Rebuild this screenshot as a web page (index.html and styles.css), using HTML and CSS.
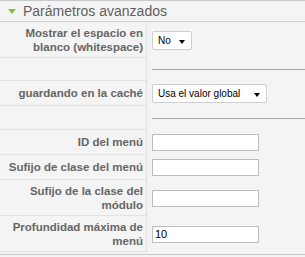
FILE: index.html
```html
<!DOCTYPE html>
<html lang="es">
<head>
<meta charset="utf-8">
<title>Parámetros avanzados</title>
<link rel="stylesheet" href="styles.css">
</head>
<body>
<div class="panel">
  <h3 class="title"><span class="toggle"></span>Parámetros avanzados</h3>
  <div class="params">
    <div class="key tall">Mostrar el espacio en blanco (whitespace)</div>
    <div class="val"><div class="select sel-no">No<span class="caret"></span></div></div>

    <div class="key sep"></div>
    <div class="val"><hr class="rule"></div>

    <div class="key mid">guardando en la caché</div>
    <div class="val"><div class="select sel-global">Usa el valor global<span class="caret"></span></div></div>

    <div class="key sep2"></div>
    <div class="val"><hr class="rule"></div>

    <div class="key mid">ID del menú</div>
    <div class="val"><input class="field" type="text" value=""></div>

    <div class="key mid">Sufijo de clase del menú</div>
    <div class="val"><input class="field" type="text" value=""></div>

    <div class="key tall">Sufijo de la clase del módulo</div>
    <div class="val"><input class="field" type="text" value=""></div>

    <div class="key tall">Profundidad máxima de menú</div>
    <div class="val"><input class="field" type="text" value="10"></div>
  </div>
</div>
</body>
</html>
```
FILE: styles.css
```css
html, body {
  margin: 0;
  padding: 0;
  background: #f4f4f4;
}
body {
  font-family: "Liberation Sans", Arial, sans-serif;
}
.panel {
  border-top: 1px solid #c8c8c8;
  border-bottom: 1px solid #c8c8c8;
  background: #f4f4f4;
  height: 253px;
  overflow: hidden;
}
.title {
  margin: 0;
  height: 20px;
  line-height: 20px;
  font-size: 14px;
  font-weight: normal;
  color: #5f5f5f;
  border-bottom: 1px solid #d0d0d0;
  display: flex;
  align-items: center;
  padding-left: 8px;
}
.toggle {
  width: 0;
  height: 0;
  border-left: 4px solid transparent;
  border-right: 4px solid transparent;
  border-top: 5px solid #80c044;
  margin-right: 7px;
  margin-top: 1px;
}
.params {
  display: grid;
  grid-template-columns: 147px 1fr;
}
.key {
  box-sizing: border-box;
  background: #f4f4f4;
  border-right: 1px solid #e2e2e2;
  border-bottom: 1px solid #e2e2e2;
  color: #666;
  font-size: 11.5px;
  font-weight: bold;
  line-height: 14px;
  text-align: right;
  padding: 0 3px 0 4px;
  display: flex;
  align-items: center;
  justify-content: flex-end;
}
.key.tall { height: 36px; }
.key.mid { min-height: 25px; }
.key.sep { height: 23px; }
.key.sep2 { height: 24px; }
.val {
  display: flex;
  align-items: center;
  padding-left: 5px;
}
.rule {
  width: 100%;
  margin: 0;
  border: 0;
  border-top: 1px solid #a8a8a8;
}
.select {
  box-sizing: border-box;
  height: 19px;
  background: #fff;
  border: 1px solid #cfcfcf;
  border-radius: 2px;
  font-size: 10px;
  color: #000;
  display: flex;
  align-items: center;
  padding-left: 5px;
  position: relative;
}
.sel-no { width: 40px; }
.sel-global { width: 115px; }
.caret {
  position: absolute;
  right: 6px;
  top: 8px;
  width: 0;
  height: 0;
  border-left: 3.5px solid transparent;
  border-right: 3.5px solid transparent;
  border-top: 4px solid #000;
}
.field {
  box-sizing: border-box;
  width: 107px;
  height: 17px;
  margin: 0;
  border: 1px solid #bdbdbd;
  background: #fff;
  padding: 0 2px;
  font-family: "Liberation Sans", Arial, sans-serif;
  font-size: 11px;
  color: #000;
  outline: none;
}
```
